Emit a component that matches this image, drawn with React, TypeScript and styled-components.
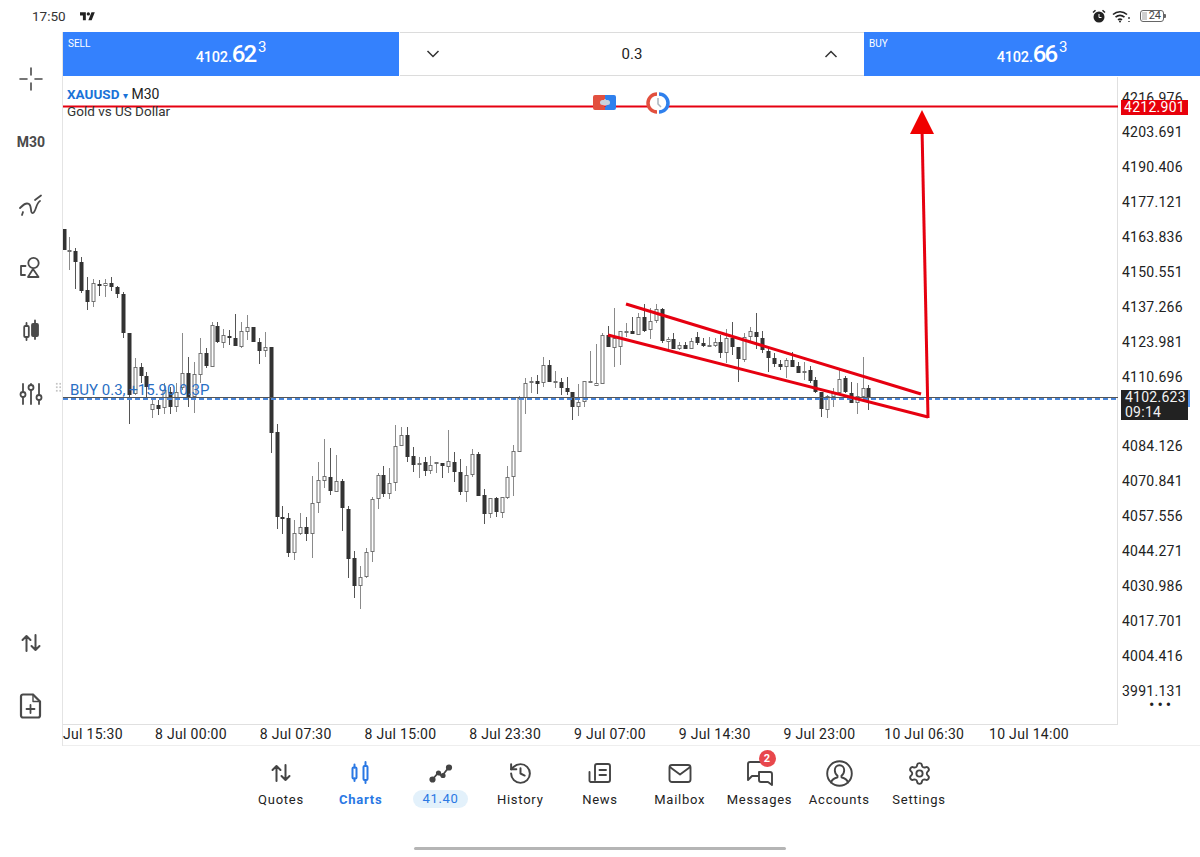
import React from 'react'
import styled, {createGlobalStyle} from 'styled-components'
import {History, Settings} from 'lucide-react'

const GlobalStyle = createGlobalStyle`
  html, body {
    margin: 0;
    padding: 0;
    background: #fff;
  }
  body {
    font-family: 'Roboto', 'Liberation Sans', sans-serif;
    color: #222;
  }
`

// x, high, body top, body bottom, low, dark
type Candle = [number, number, number, number, number, number]

const candles: Candle[] = [
  [64, 229, 229, 250, 250, 1], [69, 237, 250, 252, 270, 0], [75, 248, 251, 262, 289, 1], [81, 257, 262, 291, 293, 1],
  [87, 277, 290, 302, 310, 1], [93, 279, 283, 302, 307, 0], [99, 280, 284, 286, 296, 1], [105, 279, 283, 286, 297, 0],
  [111, 277, 283, 287, 291, 1], [117, 286, 287, 294, 298, 1], [123, 292, 294, 333, 338, 1], [129, 333, 333, 395, 424, 1],
  [135, 358, 367, 394, 395, 0], [141, 363, 367, 376, 383, 1], [146, 372, 376, 387, 397, 1], [152, 397, 404, 410, 418, 0],
  [158, 400, 405, 409, 415, 1], [164, 383, 390, 408, 414, 0], [170, 387, 392, 407, 414, 1], [176, 383, 392, 407, 412, 0],
  [182, 333, 373, 388, 390, 0], [188, 357, 373, 397, 407, 1], [194, 362, 374, 397, 413, 0], [200, 338, 353, 375, 383, 0],
  [206, 348, 353, 366, 368, 1], [212, 322, 325, 367, 367, 0], [217, 322, 326, 342, 343, 1], [223, 329, 335, 343, 348, 0],
  [229, 330, 336, 338, 345, 1], [235, 314, 338, 346, 346, 1], [241, 322, 331, 347, 348, 0], [247, 315, 327, 332, 340, 0],
  [253, 327, 327, 342, 342, 1], [259, 338, 342, 351, 364, 1], [265, 332, 347, 351, 357, 0], [271, 347, 347, 433, 453, 1],
  [277, 424, 432, 517, 529, 1], [282, 506, 517, 518, 534, 1], [288, 513, 518, 553, 557, 1], [294, 520, 533, 553, 560, 0],
  [300, 513, 527, 534, 535, 0], [306, 517, 527, 534, 541, 1], [312, 476, 503, 534, 558, 0], [318, 462, 480, 503, 513, 0],
  [324, 439, 476, 481, 488, 0], [330, 448, 477, 491, 495, 1], [336, 455, 481, 492, 492, 0], [342, 479, 481, 508, 531, 1],
  [348, 506, 509, 559, 578, 1], [354, 551, 558, 586, 598, 1], [360, 566, 577, 586, 609, 0], [366, 548, 552, 577, 578, 0],
  [372, 497, 499, 552, 562, 0], [378, 473, 475, 499, 509, 0], [383, 466, 475, 494, 497, 1], [389, 468, 483, 494, 499, 0],
  [395, 425, 446, 483, 491, 0], [401, 427, 435, 446, 446, 0], [407, 427, 435, 457, 462, 1], [413, 447, 456, 465, 472, 1],
  [419, 457, 463, 465, 478, 0], [425, 457, 462, 471, 476, 1], [430, 456, 465, 471, 474, 0], [436, 462, 462, 464, 473, 0],
  [442, 463, 463, 466, 478, 1], [448, 430, 461, 467, 473, 0], [454, 452, 462, 472, 482, 1], [460, 459, 472, 492, 495, 1],
  [466, 466, 475, 492, 502, 0], [472, 449, 454, 475, 477, 0], [478, 452, 454, 496, 496, 1], [484, 489, 495, 514, 524, 1],
  [490, 498, 498, 514, 518, 0], [496, 497, 498, 512, 517, 1], [502, 497, 497, 513, 518, 0], [507, 466, 477, 498, 499, 0],
  [513, 445, 451, 477, 496, 0], [519, 396, 398, 452, 452, 0], [525, 378, 383, 398, 414, 0], [531, 377, 381, 383, 393, 0],
  [537, 375, 381, 384, 394, 1], [543, 357, 365, 383, 387, 0], [549, 360, 365, 382, 382, 1], [555, 371, 381, 382, 388, 0],
  [561, 378, 382, 388, 395, 1], [567, 377, 388, 392, 395, 1], [572, 392, 392, 407, 420, 1], [578, 384, 402, 407, 416, 0],
  [584, 381, 381, 402, 407, 0], [590, 351, 381, 383, 383, 0], [596, 344, 383, 386, 386, 0], [602, 333, 335, 384, 384, 0],
  [608, 326, 335, 347, 347, 1], [614, 308, 338, 348, 367, 0], [620, 331, 331, 347, 365, 0], [626, 323, 331, 332, 337, 0],
  [632, 317, 331, 334, 334, 1], [638, 313, 317, 335, 335, 0], [644, 304, 317, 331, 332, 1], [650, 308, 321, 330, 339, 0],
  [656, 304, 309, 321, 323, 0], [662, 308, 309, 341, 343, 1], [668, 337, 339, 342, 349, 0], [673, 333, 339, 349, 349, 1],
  [679, 342, 345, 349, 350, 0], [685, 342, 345, 349, 349, 1], [691, 338, 341, 349, 349, 0], [697, 332, 337, 343, 345, 1],
  [703, 338, 343, 346, 347, 1], [709, 337, 345, 346, 347, 0], [715, 338, 342, 346, 347, 0], [720, 335, 342, 353, 358, 1],
  [726, 329, 338, 353, 363, 0], [732, 322, 338, 347, 355, 1], [738, 347, 347, 359, 382, 1], [744, 333, 337, 360, 362, 0],
  [750, 327, 331, 337, 343, 0], [756, 313, 332, 337, 349, 1], [762, 331, 338, 350, 353, 1], [768, 348, 351, 358, 372, 1],
  [774, 353, 358, 364, 367, 1], [780, 360, 364, 367, 370, 1], [786, 358, 360, 367, 378, 0], [792, 352, 360, 367, 367, 1],
  [798, 362, 366, 373, 373, 1], [804, 362, 371, 373, 380, 0], [810, 366, 370, 381, 383, 1], [815, 377, 380, 392, 393, 1],
  [821, 392, 392, 409, 417, 1], [827, 395, 396, 410, 418, 0], [833, 388, 392, 397, 407, 0], [839, 370, 379, 393, 393, 0],
  [845, 376, 378, 392, 393, 1], [851, 382, 393, 403, 403, 1], [857, 383, 396, 403, 414, 0], [863, 357, 388, 397, 397, 0],
  [868, 385, 388, 398, 410, 1],
]

const prices = [
  '4216.976', '4203.691', '4190.406', '4177.121', '4163.836', '4150.551', '4137.266', '4123.981', '4110.696', '',
  '4084.126', '4070.841', '4057.556', '4044.271', '4030.986', '4017.701', '4004.416', '3991.131',
]

const times = [
  '8 Jul 00:00', '8 Jul 07:30', '8 Jul 15:00', '8 Jul 23:30', '9 Jul 07:00', '9 Jul 14:30', '9 Jul 23:00',
  '10 Jul 06:30', '10 Jul 14:00',
]

const RED = '#e60010'

function ChartDrawing() {
  return (
    <ChartSvg viewBox="63 77 1055 647">
      {candles.map(([x, high, top, bottom, low, dark]) => (
        <g key={x}>
          <line x1={x + 0.5} x2={x + 0.5} y1={high} y2={low} stroke={dark ? '#555' : '#8a8a8a'} strokeWidth="1" />
          <rect
            x={x - 1}
            y={top + 0.5}
            width="3"
            height={Math.max(bottom - top - 1, 1)}
            fill={dark ? '#333' : '#fff'}
            stroke={dark ? '#333' : '#707070'}
            strokeWidth="1"
          />
        </g>
      ))}
      <line x1="63" x2="1118" y1="397.5" y2="397.5" stroke="#555" strokeWidth="1" />
      <line x1="63" x2="1118" y1="399" y2="399" stroke="#4a86d8" strokeWidth="2" strokeDasharray="5 3" />
      <line x1="63" x2="1118" y1="106.5" y2="106.5" stroke={RED} strokeWidth="2" />
      <line x1="626" y1="304" x2="921" y2="394" stroke={RED} strokeWidth="3" />
      <line x1="608" y1="335" x2="928" y2="417" stroke={RED} strokeWidth="3" />
      <path d="M928 418L922 128" stroke={RED} strokeWidth="3" fill="none" />
      <path d="M922 110L934 134H910Z" fill="#f00000" />
      <path d="M595 95h10v4l-2 2v4l2 2v3h-10a2 2 0 0 1-2-2v-11a2 2 0 0 1 2-2z" fill="#e2503f" />
      <path d="M605 95h9a2 2 0 0 1 2 2v11a2 2 0 0 1-2 2h-9v-3l2-2v-4l-2-2z" fill="#2f80ed" />
      <rect x="600" y="100" width="10" height="5" rx="2.5" fill="#c9d3dd" />
      <circle cx="658" cy="103" r="9" fill="#fff" />
      <path d="M657 94a9 9 0 0 0 0 18" fill="none" stroke="#e2503f" strokeWidth="3.500" />
      <path d="M659 94a9 9 0 0 1 0 18" fill="none" stroke="#2f80ed" strokeWidth="3.500" />
      <path d="M658 98v6l3 3" fill="none" stroke="#aab4bd" strokeWidth="1.5" />
    </ChartSvg>
  )
}

const strokeProps = {fill: 'none', stroke: 'currentColor', strokeLinecap: 'round', strokeLinejoin: 'round'} as const

function ArrowsIcon() {
  return (
    <svg width="24" height="24" viewBox="0 0 24 24" {...strokeProps} strokeWidth="2">
      <path d="M7.5 20V5M3.5 9l4-4 4 4M16.5 4v15M12.5 15l4 4 4-4" />
    </svg>
  )
}

function RailIcons() {
  return {
    cross: (
      <svg width="24" height="24" viewBox="0 0 24 24" {...strokeProps} strokeWidth="1.6">
        <path d="M1 12h7M16 12h7M12 1v7M12 16v7" />
      </svg>
    ),
    wave: (
      <svg width="26" height="24" viewBox="0 0 26 24" {...strokeProps} strokeWidth="1.8">
        <path d="M2 15c3-3 6-6 9-4s1 10 4 9 3-10 7-12" />
        <path d="M4 22l1-3M17 7l6-4.500" />
      </svg>
    ),
    shapes: (
      <svg width="24" height="24" viewBox="0 0 24 24" {...strokeProps} strokeWidth="1.8">
        <circle cx="14.5" cy="7" r="5.2" />
        <path d="M14 13l-5 8h10.5zM6.5 10H2v9h4" />
      </svg>
    ),
    candles: (
      <svg width="24" height="24" viewBox="0 0 24 24" {...strokeProps} strokeWidth="1.8">
        <rect x="5.2" y="7" width="4.6" height="11" rx="1" />
        <path d="M7.5 4v3M7.5 18v3M16 1.5v4M16 17v3" />
        <rect x="13" y="5" width="6" height="12" rx="1" fill="currentColor" />
      </svg>
    ),
    sliders: (
      <svg width="26" height="24" viewBox="0 0 26 24" {...strokeProps} strokeWidth="1.8">
        <path d="M5 2v8M5 15v7M13 8v14M13 2v1M21 2v11M21 18v4" />
        <circle cx="5" cy="12.5" r="2.5" />
        <circle cx="13" cy="5.5" r="2.5" />
        <circle cx="21" cy="15.5" r="2.5" />
      </svg>
    ),
    file: (
      <svg width="24" height="26" viewBox="0 0 24 26" {...strokeProps} strokeWidth="2.2">
        <path d="M4 1.5h10l7 7v14a2 2 0 0 1-2 2H4a2 2 0 0 1-2-2v-19a2 2 0 0 1 2-2z" />
        <path d="M14 1.5v7h7" strokeWidth="1.4" />
        <path d="M11.5 12v8M7.5 16h8" strokeWidth="1.8" />
      </svg>
    ),
  }
}

const navItems: {label: string; icon: React.ReactNode; active?: boolean; pill?: boolean; badge?: string}[] = [
  {label: 'Quotes', icon: <ArrowsIcon />},
  {
    label: 'Charts',
    active: true,
    icon: (
      <svg width="24" height="24" viewBox="0 0 24 24" {...strokeProps} strokeWidth="2">
        <rect x="3.5" y="6.5" width="4" height="11" rx="1" />
        <rect x="14.5" y="5" width="4" height="14" rx="1" />
        <path d="M5.5 3.5v3M5.5 17.5v2.500M16.500 1v4M16.500 19v3" />
      </svg>
    ),
  },
  {
    label: '41.40',
    pill: true,
    icon: (
      <svg width="24" height="24" viewBox="0 0 24 24" {...strokeProps} strokeWidth="1.800">
        <path d="M3 19l6-7 4 3 7-9" />
        <circle cx="3.500" cy="18.500" r="2.200" fill="currentColor" />
        <circle cx="9.500" cy="12" r="1.700" fill="currentColor" />
        <circle cx="14" cy="14.500" r="1.700" fill="currentColor" />
        <circle cx="20" cy="6.500" r="2.200" fill="currentColor" />
      </svg>
    ),
  },
  {label: 'History', icon: <History size={25} strokeWidth={1.9} />},
  {
    label: 'News',
    icon: (
      <svg width="24" height="24" viewBox="0 0 24 24" {...strokeProps} strokeWidth="1.9">
        <path d="M7 19V5a2 2 0 0 1 2-2h11a2 2 0 0 1 2 2v14a2 2 0 0 1-2 2H3" />
        <path d="M3 21a1.500 1.500 0 0 1-1.500-1.500V11M11.500 9h6.500M11.500 14h6.500" />
      </svg>
    ),
  },
  {
    label: 'Mailbox',
    icon: (
      <svg width="24" height="24" viewBox="0 0 24 24" {...strokeProps} strokeWidth="1.9">
        <rect x="1.500" y="4" width="21" height="17" rx="2.500" />
        <path d="M2.500 6.500L12 13.500l9.500-7" />
      </svg>
    ),
  },
  {
    label: 'Messages',
    badge: '2',
    icon: (
      <svg width="28" height="26" viewBox="0 0 28 26" {...strokeProps} strokeWidth="1.9">
        <path d="M12 16H6l-4 4V4a2 2 0 0 1 2-2h14" />
        <path d="M13 12h11a2 2 0 0 1 2 2v11l-4-3h-7a2 2 0 0 1-2-2z" />
      </svg>
    ),
  },
  {
    label: 'Accounts',
    icon: (
      <svg width="27" height="27" viewBox="0 0 27 27" {...strokeProps} strokeWidth="1.9">
        <circle cx="13.500" cy="13.500" r="12.300" />
        <path d="M5 22.500c1-3.500 3-4 6.500-5.200v-1.600c-1.800-1.400-2.700-3.200-2.700-5.500 0-3 2-5 4.700-5s4.700 2 4.700 5c0 2.300-.9 4.100-2.700 5.500v1.600c3.500 1.200 5.500 1.700 6.500 5.200" />
      </svg>
    ),
  },
  {label: 'Settings', icon: <Settings size={25} strokeWidth={1.8} />},
]

function App() {
  const rail = RailIcons()
  return (
    <Page>
      <GlobalStyle />
      <StatusBar>
        <Clock>17:50</Clock>
        <svg width="15" height="10" viewBox="0 0 36 24" fill="#222">
          <path d="M14 22H7V11H0V3h14zM28 22h-8l7.500-19h8z" />
          <circle cx="20" cy="7" r="4" />
        </svg>
        <StatusRight>
          <svg width="14" height="14" viewBox="0 0 14 14" fill="#222">
            <circle cx="7" cy="8" r="5.500" />
            <path d="M0.500 3L3 .8l1 1L1.500 4zM13.500 3L11 .8l-1 1L12.500 4z" />
            <path d="M7 5v3.500h2.500" stroke="#fff" strokeWidth="1" fill="none" />
          </svg>
          <svg width="18" height="13" viewBox="0 0 18 13" fill="none" stroke="#222" strokeWidth="1.700">
            <path d="M1 4.500C5 .8 11 .8 15 4.500M3.500 7.200C6.500 4.800 9.500 4.800 12.500 7.200M6 9.800c1.300-1 2.700-1 4 0" />
            <circle cx="8" cy="11.500" r="1" fill="#222" stroke="none" />
            <path d="M17 7v2M17 11v1" strokeWidth="1.300" />
          </svg>
          <Battery>
            <BatteryLevel />
            24
          </Battery>
        </StatusRight>
      </StatusBar>
      <Body>
        <Rail>
          <RailButton>{rail.cross}</RailButton>
          <RailButton>M30</RailButton>
          <RailButton>{rail.wave}</RailButton>
          <RailButton>{rail.shapes}</RailButton>
          <RailButton>{rail.candles}</RailButton>
          <RailButton>{rail.sliders}</RailButton>
          <RailSpacer />
          <RailButton>
            <ArrowsIcon />
          </RailButton>
          <RailButton>{rail.file}</RailButton>
        </Rail>
        <Main>
          <TradeBar>
            <PriceButton>
              <SideLabel>SELL</SideLabel>
              <Quote>
                4102.<Big>62</Big>
                <Sup>3</Sup>
              </Quote>
            </PriceButton>
            <VolumeBox>
              <svg width="14" height="8" viewBox="0 0 14 8" fill="none" stroke="#333" strokeWidth="1.500">
                <path d="M1.500 1l5.500 5.500L12.500 1" />
              </svg>
              <span>0.3</span>
              <svg width="14" height="8" viewBox="0 0 14 8" fill="none" stroke="#333" strokeWidth="1.500">
                <path d="M1.500 7L7 1.500 12.500 7" />
              </svg>
            </VolumeBox>
            <PriceButton>
              <SideLabel>BUY</SideLabel>
              <Quote>
                4102.<Big>66</Big>
                <Sup>3</Sup>
              </Quote>
            </PriceButton>
          </TradeBar>
          <ChartRow>
            <Plot>
              <ChartDrawing />
              <Legend>
                <Symbol>XAUUSD</Symbol>
                <Caret>▾</Caret>M30
                <LegendName>Gold vs US Dollar</LegendName>
              </Legend>
              <Grip />
              <OrderLabel>BUY 0.3, +15.90 0.3P</OrderLabel>
            </Plot>
            <PriceAxis>
              {prices.map((price, i) => (
                <PriceRow key={i}>{price}</PriceRow>
              ))}
              <AxisDots>•••</AxisDots>
              <AlertTag>4212.901</AlertTag>
              <LastTag>
                4102.623
                <br />
                09:14
              </LastTag>
            </PriceAxis>
          </ChartRow>
          <TimeAxis>
            <FirstTime>Jul 15:30</FirstTime>
            {times.map(time => (
              <TimeCell key={time}>{time}</TimeCell>
            ))}
          </TimeAxis>
        </Main>
      </Body>
      <BottomNav>
        {navItems.map(item => (
          <NavItem key={item.label} $active={item.active}>
            <NavIcon>
              {item.icon}
              {item.badge && <Badge>{item.badge}</Badge>}
            </NavIcon>
            {item.pill ? <Pill>{item.label}</Pill> : <NavLabel $active={item.active}>{item.label}</NavLabel>}
          </NavItem>
        ))}
      </BottomNav>
      <HomeBar />
    </Page>
  )
}

export default App

const Page = styled.div`
  width: 1200px;
  height: 857px;
  display: flex;
  flex-direction: column;
  overflow: hidden;
  background: #fff;
`

const StatusBar = styled.div`
  height: 32px;
  flex: none;
  display: flex;
  align-items: center;
  gap: 14px;
  padding: 0 34px 0 32px;
`

const Clock = styled.span`
  font-size: 13.5px;
  color: #333;
`

const StatusRight = styled.div`
  margin-left: auto;
  display: flex;
  align-items: center;
  gap: 6px;
`

const Battery = styled.div`
  position: relative;
  width: 20px;
  height: 10px;
  margin-left: 4px;
  margin-right: 2px;
  border: 1px solid #666;
  border-radius: 3px;
  font-size: 11px;
  line-height: 10px;
  text-align: right;
  padding-right: 2px;
  color: #444;

  &::after {
    content: '';
    position: absolute;
    right: -3px;
    top: 3px;
    width: 2px;
    height: 4px;
    background: #666;
    border-radius: 0 1px 1px 0;
  }
`

const BatteryLevel = styled.span`
  position: absolute;
  left: 1px;
  top: 1px;
  bottom: 1px;
  width: 5px;
  background: #cfcfcf;
`

const Body = styled.div`
  flex: none;
  display: flex;
`

const Rail = styled.div`
  width: 62px;
  flex: none;
  display: flex;
  flex-direction: column;
  padding: 15px 0 9px;
  border-right: 1px solid #e4e4e4;
  box-sizing: content-box;
`

const RailButton = styled.div`
  height: 63px;
  flex: none;
  display: flex;
  align-items: center;
  justify-content: center;
  color: #4a4a4a;
  font-size: 14px;
  font-weight: 700;
`

const RailSpacer = styled.div`
  flex: 1;
`

const Main = styled.div`
  flex: 1;
  min-width: 0;
  display: flex;
  flex-direction: column;
`

const TradeBar = styled.div`
  height: 45px;
  flex: none;
  display: grid;
  grid-template-columns: 336px 1fr 336px;
`

const PriceButton = styled.div`
  position: relative;
  background: #3481fd;
  color: #fff;
  display: flex;
  align-items: center;
  justify-content: center;
  height: 44px;
`

const SideLabel = styled.span`
  position: absolute;
  left: 5px;
  top: 6px;
  font-size: 10px;
`

const Quote = styled.div`
  font-size: 14.5px;
  font-weight: 500;
  line-height: 44px;
  white-space: nowrap;
  padding-top: 3px;
  letter-spacing: -0.2px;
`

const Big = styled.span`
  font-size: 24px;
  letter-spacing: -2px;
`

const Sup = styled.span`
  font-size: 15px;
  font-weight: 400;
  position: relative;
  top: -10px;
  margin-left: 3px;
`

const VolumeBox = styled.div`
  height: 44px;
  border-top: 1px solid #dcdcdc;
  border-bottom: 1px solid #dcdcdc;
  box-sizing: border-box;
  display: flex;
  align-items: center;
  justify-content: space-between;
  padding: 0 26px;
  font-size: 15px;
  color: #222;
  margin-left: 1px;
`

const ChartRow = styled.div`
  height: 648px;
  flex: none;
  display: flex;
`

const Plot = styled.div`
  position: relative;
  width: 1055px;
  height: 648px;
  flex: none;
  border-right: 1px solid #e0e0e0;
  border-bottom: 1px solid #e0e0e0;
  box-sizing: border-box;
`

const ChartSvg = styled.svg`
  display: block;
  width: 1055px;
  height: 647px;
`

const Legend = styled.div`
  position: absolute;
  left: 4px;
  top: 9px;
  font-size: 14px;
  line-height: 16px;
  color: #222;
`

const Symbol = styled.span`
  color: #1a73d8;
  font-size: 13.5px;
  font-weight: 700;
`

const Caret = styled.span`
  color: #1a73d8;
  font-size: 10px;
  margin: 0 3px 0 4px;
`

const LegendName = styled.div`
  color: #333;
  font-size: 13.5px;
  line-height: 15px;
`

const Grip = styled.div`
  position: absolute;
  left: -8px;
  top: 305px;
  width: 6px;
  height: 10px;
  background-image: radial-gradient(#c4c4c4 1px, transparent 1.2px);
  background-size: 3.500px 3.500px;
`

const OrderLabel = styled.div`
  position: absolute;
  left: 7px;
  top: 305px;
  font-size: 15px;
  line-height: 16px;
  color: #2a6fc4;
  white-space: nowrap;
`

const PriceAxis = styled.div`
  position: relative;
  flex: 1;
  padding-top: 3.500px;
  box-sizing: border-box;
  font-size: 14px;
  color: #222;
`

const PriceRow = styled.div`
  height: 34.900px;
  line-height: 34.900px;
  padding-left: 4px;
  letter-spacing: 0.25px;
`

const AxisDots = styled.div`
  margin-top: -7px;
  padding-left: 31px;
  font-size: 16px;
  letter-spacing: 3px;
  line-height: 6px;
  color: #222;
`

const AlertTag = styled.div`
  position: absolute;
  left: 3px;
  top: 23px;
  width: 67px;
  height: 15px;
  background: #e8000b;
  color: #fff;
  line-height: 15px;
  text-align: center;
  letter-spacing: 0.25px;
`

const LastTag = styled.div`
  position: absolute;
  left: 3px;
  top: 313px;
  width: 67px;
  height: 30px;
  background: #222;
  color: #f2f2f2;
  font-size: 14px;
  line-height: 15px;
  text-align: left;
  padding-left: 4px;
  box-sizing: border-box;
  letter-spacing: 0.25px;

  &::after {
    content: '';
    position: absolute;
    right: -2px;
    top: 0;
    width: 2px;
    height: 17px;
    background: #5d9cf0;
  }
`

const TimeAxis = styled.div`
  height: 21px;
  flex: none;
  display: flex;
  align-items: center;
  font-size: 14px;
  letter-spacing: 0.3px;
  color: #222;
  white-space: nowrap;
  border-bottom: 1px solid #eee;
  box-sizing: border-box;
  padding-bottom: 2px;
`

const FirstTime = styled.div`
  width: 75.650px;
  flex: none;
`

const TimeCell = styled.div`
  width: 104.750px;
  flex: none;
  text-align: center;
`

const BottomNav = styled.nav`
  display: flex;
  justify-content: center;
  padding-top: 13px;
  height: 84px;
  box-sizing: border-box;
  flex: none;
`

const NavItem = styled.div<{$active?: boolean}>`
  width: 79.750px;
  display: flex;
  flex-direction: column;
  align-items: center;
  color: ${props => (props.$active ? '#2a78e4' : '#444')};
`

const NavIcon = styled.div`
  position: relative;
  height: 28px;
  display: flex;
  align-items: center;
  justify-content: center;
`

const NavLabel = styled.span<{$active?: boolean}>`
  margin-top: 4px;
  font-size: 13px;
  line-height: 18px;
  letter-spacing: 0.75px;
  font-weight: ${props => (props.$active ? 700 : 400)};
  color: ${props => (props.$active ? '#2a78e4' : '#222')};
`

const Pill = styled.span`
  margin-top: 3px;
  width: 55px;
  height: 18px;
  line-height: 18px;
  border-radius: 9px;
  text-align: center;
  font-size: 13px;
  letter-spacing: 0.7px;
  background: #e3f1fb;
  color: #2a78e4;
`

const Badge = styled.span`
  position: absolute;
  right: -2px;
  top: -9px;
  width: 17px;
  height: 17px;
  border-radius: 50%;
  background: #e8474c;
  color: #fff;
  font-size: 11px;
  font-weight: 700;
  line-height: 17px;
  text-align: center;
`

const HomeBar = styled.div`
  width: 372px;
  height: 3px;
  margin: 17px auto 0;
  border-radius: 2px;
  background: #b5b5b5;
  flex: none;
`
